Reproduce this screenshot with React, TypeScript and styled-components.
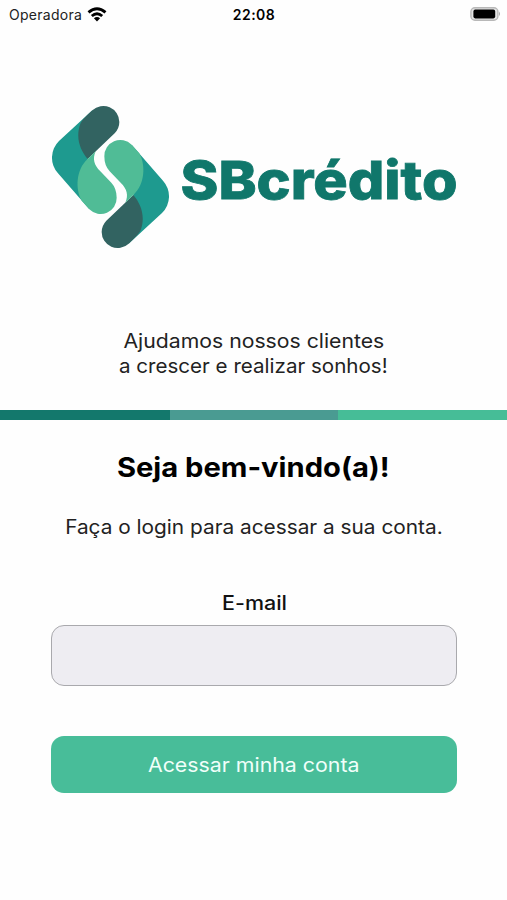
import React from "react";
import styled, { createGlobalStyle } from "styled-components";

const GlobalStyle = createGlobalStyle`
  * { box-sizing: border-box; }
  body { margin: 0; background: #fefefe; font-family: Inter, sans-serif; color: #000; }
`;

const Screen = styled.main`
  width: 100%;
  height: 900px;
  display: flex;
  flex-direction: column;
  overflow: hidden;
`;

const StatusBar = styled.header`
  height: 28px;
  padding: 0 6px 0 9px;
  display: grid;
  grid-template-columns: 1fr auto 1fr;
  align-items: center;
  flex: none;
`;

const Carrier = styled.div`
  display: flex;
  align-items: center;
  gap: 5px;
  font-size: 14px;
  letter-spacing: 0.28px;
  color: #222;
`;

const Clock = styled.time`
  font-size: 14px;
  font-weight: 600;
  letter-spacing: 0.45px;
  transform: translateX(-1px);
`;

const BatteryIcon = styled.svg`
  justify-self: end;
`;

const Brand = styled.div`
  height: 144px;
  margin: 77px 46px 0 51px;
  display: flex;
  align-items: center;
  flex: none;
`;

const Wordmark = styled.svg`
  flex: none;
  margin: 5px 0 0 7px;
`;

const Line = styled.span<{ $size: number; $weight?: number; $stretch: number; $color?: string }>`
  display: block;
  width: max-content;
  font-size: ${(p) => p.$size}px;
  font-weight: ${(p) => p.$weight ?? 370};
  color: ${(p) => p.$color ?? "#000"};
  transform: scaleX(${(p) => p.$stretch});
  white-space: nowrap;
`;

const Slogan = styled.p`
  margin: 80px 0 0;
  display: flex;
  flex-direction: column;
  align-items: center;
  line-height: 25px;
`;

const Stripes = styled.div`
  height: 10px;
  margin-top: 31px;
  display: grid;
  grid-template-columns: 170px 168px 1fr;
  flex: none;
`;

const Stripe = styled.div<{ $color: string }>`
  background: ${(p) => p.$color};
`;

const Title = styled.h1`
  margin: 29px 0 0;
  display: flex;
  justify-content: center;
  line-height: 38px;
`;

const Hint = styled.p`
  margin: 25px 0 0;
  display: flex;
  justify-content: center;
  line-height: 30px;
`;

const Form = styled.form`
  margin: 47px 50px 0 51px;
  display: flex;
  flex-direction: column;
`;

const Label = styled.label`
  display: flex;
  justify-content: center;
  line-height: 28px;
`;

const Field = styled.input`
  width: 100%;
  height: 61px;
  margin-top: 8px;
  padding: 0 16px;
  border: 1px solid #a9a9ad;
  border-radius: 13px;
  background: #eeedf2;
  font: 20px Inter, sans-serif;
  outline: none;
`;

const Submit = styled.button`
  height: 57px;
  margin-top: 50px;
  padding: 0;
  display: flex;
  align-items: center;
  justify-content: center;
  border: 0;
  border-radius: 13px;
  background: #48bd99;
  font-family: inherit;
`;

const LogoHalf = () => (
  <>
    <path fill="#1e9a8f" d="M157 46 L57 138 A70 70 0 0 0 54 235 L148 343 L146 270 L143 192 L165 110 Z" />
    <path fill="#326361" d="M157 46 A48 48 0 0 1 238 81 Q238 100 224 115 L143 192 C120 165 106 128 121 86 Q124 76 157 46 Z" />
    <path fill="#50bc96" d="M167 169 C157 192 162 210 181 229 L214 263 Q230 280 230 308 A48 48 0 0 1 148 343 L125 317 C106 284 107 224 143 192 Z" />
  </>
);

export default function App() {
  return (
    <>
      <GlobalStyle />
      <Screen>
        <StatusBar>
          <Carrier>
            Operadora
            <svg width="20" height="15" viewBox="0 0 20 15" fill="none" stroke="#000" strokeWidth="2.9">
              <path d="M1.5 5.3 Q10 -1.8 18.5 5.3" />
              <path d="M4.8 9 Q10 4.5 15.2 9" />
              <path d="M10 14.5 L6.9 11.3 Q10 8.8 13.1 11.3 Z" fill="#000" stroke="none" />
            </svg>
          </Carrier>
          <Clock>22:08</Clock>
          <BatteryIcon width="31" height="15" viewBox="0 0 31 15">
            <rect x="0.9" y="0.7" width="27" height="12.6" rx="4" fill="#e4e4e4" stroke="#b8b8b8" strokeWidth="1.4" />
            <rect x="3.4" y="2.6" width="21.8" height="8.8" rx="1.8" fill="#000" />
            <path d="M29 4.5 Q31 6.8 29 9 Z" fill="#aaa" />
          </BatteryIcon>
        </StatusBar>

        <Brand>
          <svg width="119" height="144" viewBox="33 30 357 432" aria-label="SBcrédito">
            <LogoHalf />
            <g transform="rotate(180 211.5 246)">
              <LogoHalf />
            </g>
          </svg>
          <Wordmark width="284" height="70" viewBox="0 0 284 70">
            <text x="3.5" y="54" fill="#10776b" stroke="#10776b" strokeWidth="0.8" fontFamily="Inter, sans-serif" fontSize="52.5" fontWeight="800" textLength="277" lengthAdjust="spacingAndGlyphs">
              SBcrédito
            </text>
          </Wordmark>
        </Brand>

        <Slogan>
          <Line $size={19.5} $stretch={1.088} $color="#222">Ajudamos nossos clientes</Line>
          <Line $size={19.5} $stretch={1.055} $color="#222">a crescer e realizar sonhos!</Line>
        </Slogan>

        <Stripes>
          <Stripe $color="#13786c" />
          <Stripe $color="#4a9b92" />
          <Stripe $color="#46bd97" />
        </Stripes>

        <Title>
          <Line $size={27} $weight={700} $stretch={1.08}>Seja bem-vindo(a)!</Line>
        </Title>
        <Hint>
          <Line $size={19.5} $stretch={1.067} $color="#222">Faça o login para acessar a sua conta.</Line>
        </Hint>

        <Form onSubmit={(e) => e.preventDefault()}>
          <Label htmlFor="email">
            <Line $size={19.5} $weight={480} $stretch={1.1} $color="#111">E-mail</Line>
          </Label>
          <Field id="email" type="email" />
          <Submit type="submit">
            <Line $size={19.5} $stretch={1.094} $color="#f0fffa">Acessar minha conta</Line>
          </Submit>
        </Form>
      </Screen>
    </>
  );
}
